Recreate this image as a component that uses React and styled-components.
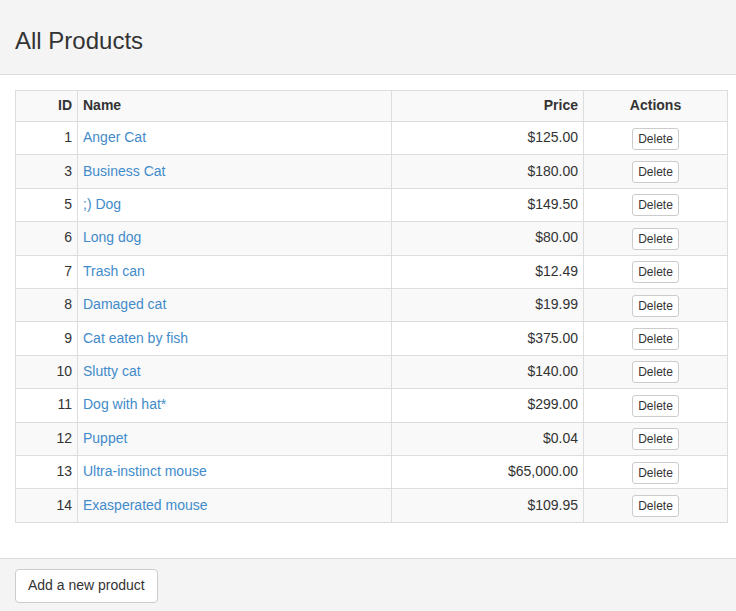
import React from "react";
import styled, { createGlobalStyle } from "styled-components";

const Global = createGlobalStyle`
  html, body { margin: 0; padding: 0; background: #fff; }
  body {
    font-family: "Liberation Sans", Arial, Helvetica, sans-serif;
    font-size: 14px;
    line-height: 1.42857;
    color: #333;
  }
  * { box-sizing: border-box; }
`;

const Page = styled.div`
  width: 736px;
  height: 611px;
  display: flex;
  flex-direction: column;
`;

const Header = styled.header`
  flex-shrink: 0;
  height: 75px;
  background: #f4f4f4;
  border-bottom: 1px solid #ddd;
  padding: 28px 15px 0;
`;

const Title = styled.h1`
  margin: 0;
  font-size: 24px;
  font-weight: 400;
  line-height: 1.1;
  color: #333;
`;

const Main = styled.main`
  flex-shrink: 0;
  padding: 15px 8px 35px 15px;
`;

const Table = styled.table`
  width: 713px;
  border-collapse: collapse;
  border: 1px solid #ddd;
`;

const Row = styled.tr`
  height: ${(p) => (p.$head ? "31px" : "33.4px")};
  background: ${(p) => (p.$striped ? "#f9f9f9" : "#fff")};
`;

const Cell = styled.td`
  border: 1px solid #ddd;
  padding: 0 5px;
  vertical-align: middle;
  text-align: ${(p) => p.$align || "left"};
  width: ${(p) => p.$w || "auto"};
  font-weight: ${(p) => (p.$bold ? 700 : 400)};
  color: #333;
`;

const Link = styled.a`
  color: #428bca;
  text-decoration: none;
`;

const SmallButton = styled.button`
  font-family: inherit;
  font-size: 12px;
  line-height: 1.5;
  padding: 1px 5px;
  background: #fff;
  border: 1px solid #ccc;
  border-radius: 3px;
  color: #333;
  cursor: pointer;
  margin-top: 1px;
`;

const Footer = styled.footer`
  flex: 1;
  background: #f4f4f4;
  border-top: 1px solid #ddd;
  padding: 10px 15px;
`;

const Button = styled.button`
  font-family: inherit;
  font-size: 14px;
  line-height: 1.42857;
  padding: 6px 12px;
  background: #fff;
  border: 1px solid #ccc;
  border-radius: 4px;
  color: #333;
  cursor: pointer;
`;

const products = [
  [1, "Anger Cat", "$125.00"],
  [3, "Business Cat", "$180.00"],
  [5, ";) Dog", "$149.50"],
  [6, "Long dog", "$80.00"],
  [7, "Trash can", "$12.49"],
  [8, "Damaged cat", "$19.99"],
  [9, "Cat eaten by fish", "$375.00"],
  [10, "Slutty cat", "$140.00"],
  [11, "Dog with hat*", "$299.00"],
  [12, "Puppet", "$0.04"],
  [13, "Ultra-instinct mouse", "$65,000.00"],
  [14, "Exasperated mouse", "$109.95"],
];

export default function App() {
  return (
    <Page>
      <Global />
      <Header>
        <Title>All Products</Title>
      </Header>
      <Main>
        <Table>
          <tbody>
            <Row $head $striped>
              <Cell as="th" $align="right" $bold $w="62px">ID</Cell>
              <Cell as="th" $bold $w="314px">Name</Cell>
              <Cell as="th" $align="right" $bold $w="192px">Price</Cell>
              <Cell as="th" $align="center" $bold>Actions</Cell>
            </Row>
            {products.map(([id, name, price], i) => (
              <Row key={id} $striped={i % 2 === 1}>
                <Cell $align="right">{id}</Cell>
                <Cell>
                  <Link href="#">{name}</Link>
                </Cell>
                <Cell $align="right">{price}</Cell>
                <Cell $align="center">
                  <SmallButton>Delete</SmallButton>
                </Cell>
              </Row>
            ))}
          </tbody>
        </Table>
      </Main>
      <Footer>
        <Button>Add a new product</Button>
      </Footer>
    </Page>
  );
}
